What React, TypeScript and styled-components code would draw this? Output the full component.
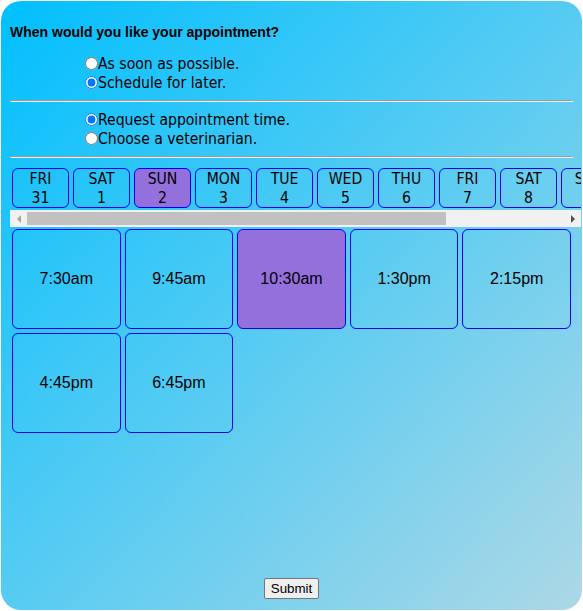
import React, { useLayoutEffect, useRef, useState } from "react";
import styled, { createGlobalStyle } from "styled-components";

const GlobalStyle = createGlobalStyle`
  html, body {
    margin: 0;
    padding: 0;
    background: #ffffff;
  }
  * { box-sizing: border-box; }
`;

const Card = styled.form`
  margin: 1px;
  height: calc(100vh - 2px);
  border-radius: 20px;
  background: linear-gradient(to bottom right, #00bfff, #add8e6);
  padding: 0 9px 11px 9px;
  display: flex;
  flex-direction: column;
  overflow: hidden;
  color: #000;
  font-family: "DejaVu Sans Condensed", "DejaVu Sans", sans-serif;
  font-stretch: condensed;
`;

const Heading = styled.div`
  font-family: "Liberation Sans", Arial, sans-serif;
  font-stretch: normal;
  font-weight: bold;
  font-size: 14px;
  line-height: 16px;
  margin: 23px 0 14px 0;
`;

const RadioGroup = styled.div`
  display: flex;
  flex-direction: column;
  padding-left: 75px;
`;

const RadioRow = styled.label`
  display: flex;
  align-items: center;
  height: 19px;
  font-size: 15.6px;
  cursor: pointer;
`;

const Radio = styled.input`
  margin: 0;
  width: 13px;
  height: 13px;
`;

const Divider = styled.hr`
  margin: 8px 0;
  border-style: inset;
  border-width: 1px;
  color: gray;
  height: 0;
  overflow: hidden;
`;

const DayArea = styled.div`
  margin-right: -8px;
  display: flex;
  flex-direction: column;
`;

const DayScroller = styled.div`
  overflow-x: auto;
  overflow-y: hidden;
  padding: 2px 2px 1px 2px;
  scrollbar-width: none;
  &::-webkit-scrollbar {
    display: none;
  }
`;

const DayRow = styled.div`
  display: flex;
  gap: 4px;
  width: max-content;
`;

const DayButton = styled.button<{ $selected?: boolean }>`
  flex: none;
  width: 57px;
  height: 40px;
  padding: 2px 0 0 0;
  border: 1px solid #0000ff;
  border-radius: 6px;
  background: ${(p) => (p.$selected ? "#9370db" : "transparent")};
  font-family: "DejaVu Sans Condensed", "DejaVu Sans", sans-serif;
  font-stretch: condensed;
  font-size: 15.6px;
  line-height: 19px;
  color: #000;
  display: flex;
  flex-direction: column;
  align-items: center;
  justify-content: center;
  cursor: pointer;
`;

const ScrollBar = styled.div`
  margin-top: 1px;
  height: 17px;
  display: flex;
  background: #f1f1f1;
`;

const ScrollArrow = styled.button`
  flex: none;
  width: 17px;
  height: 17px;
  padding: 0;
  border: none;
  background: #f1f1f1;
  display: flex;
  align-items: center;
  justify-content: center;
  cursor: default;
`;

const ScrollTrack = styled.div`
  position: relative;
  flex: 1;
`;

const ScrollThumb = styled.div`
  position: absolute;
  top: 2px;
  bottom: 2px;
  background: #c1c1c1;
`;

const SlotGrid = styled.div`
  display: grid;
  grid-template-columns: repeat(5, 1fr);
  gap: 4px;
  padding: 0 2px;
  margin-top: 2px;
`;

const Slot = styled.button<{ $selected?: boolean }>`
  height: 100px;
  padding: 0;
  border: 1px solid #0000ff;
  border-radius: 6px;
  background: ${(p) => (p.$selected ? "#9370db" : "transparent")};
  font-family: "Liberation Sans", Arial, sans-serif;
  font-size: 16px;
  color: #000;
  cursor: pointer;
`;

const Spacer = styled.div`
  flex: 1;
`;

const SubmitRow = styled.div`
  display: flex;
  justify-content: center;
`;

const SubmitButton = styled.button`
  font-family: "Liberation Sans", Arial, sans-serif;
  font-stretch: normal;
  font-size: 13.333px;
  padding: 1px 6px;
  border: 1px solid #767676;
  border-radius: 2px;
  background: #efefef;
  color: #000;
  height: 21px;
`;

const days = [
  ["FRI", "31"],
  ["SAT", "1"],
  ["SUN", "2"],
  ["MON", "3"],
  ["TUE", "4"],
  ["WED", "5"],
  ["THU", "6"],
  ["FRI", "7"],
  ["SAT", "8"],
  ["SUN", "9"],
  ["MON", "10"],
  ["TUE", "11"],
];

const slots = ["7:30am", "9:45am", "10:30am", "1:30pm", "2:15pm", "4:45pm", "6:45pm"];

export default function App() {
  const [when, setWhen] = useState("later");
  const [mode, setMode] = useState("time");
  const [day, setDay] = useState(2);
  const [slot, setSlot] = useState(2);
  const scrollerRef = useRef<HTMLDivElement>(null);
  const trackRef = useRef<HTMLDivElement>(null);
  const [thumb, setThumb] = useState({ left: 0, width: 419 });

  const measure = () => {
    const s = scrollerRef.current;
    const t = trackRef.current;
    if (!s || !t) return;
    const track = t.clientWidth;
    const ratio = s.clientWidth / s.scrollWidth;
    const width = Math.max(17, Math.round(track * ratio));
    const max = s.scrollWidth - s.clientWidth;
    const left = max > 0 ? Math.round((s.scrollLeft / max) * (track - width)) : 0;
    setThumb({ left, width });
  };

  useLayoutEffect(() => {
    measure();
    window.addEventListener("resize", measure);
    return () => window.removeEventListener("resize", measure);
  }, []);

  const scrollBy = (dx: number) => {
    scrollerRef.current?.scrollBy({ left: dx });
  };

  const atStart = thumb.left <= 0;

  return (
    <>
      <GlobalStyle />
      <Card onSubmit={(e) => e.preventDefault()}>
        <Heading>When would you like your appointment?</Heading>
        <RadioGroup>
          <RadioRow>
            <Radio type="radio" name="when" checked={when === "asap"} onChange={() => setWhen("asap")} />
            As soon as possible.
          </RadioRow>
          <RadioRow>
            <Radio type="radio" name="when" checked={when === "later"} onChange={() => setWhen("later")} />
            Schedule for later.
          </RadioRow>
        </RadioGroup>
        <Divider />
        <RadioGroup>
          <RadioRow>
            <Radio type="radio" name="mode" checked={mode === "time"} onChange={() => setMode("time")} />
            Request appointment time.
          </RadioRow>
          <RadioRow>
            <Radio type="radio" name="mode" checked={mode === "vet"} onChange={() => setMode("vet")} />
            Choose a veterinarian.
          </RadioRow>
        </RadioGroup>
        <Divider />
        <DayArea>
          <DayScroller ref={scrollerRef} onScroll={measure}>
            <DayRow>
              {days.map(([d, n], i) => (
                <DayButton type="button" key={i} $selected={i === day} onClick={() => setDay(i)}>
                  <span>{d}</span>
                  <span>{n}</span>
                </DayButton>
              ))}
            </DayRow>
          </DayScroller>
          <ScrollBar>
            <ScrollArrow type="button" aria-label="Scroll left" onClick={() => scrollBy(-40)}>
              <svg width="4" height="8" viewBox="0 0 4 8">
                <polygon points="4,0 4,8 0,4" fill={atStart ? "#a3a3a3" : "#505050"} />
              </svg>
            </ScrollArrow>
            <ScrollTrack ref={trackRef}>
              <ScrollThumb style={{ left: thumb.left, width: thumb.width }} />
            </ScrollTrack>
            <ScrollArrow type="button" aria-label="Scroll right" onClick={() => scrollBy(40)}>
              <svg width="4" height="8" viewBox="0 0 4 8">
                <polygon points="0,0 4,4 0,8" fill="#505050" />
              </svg>
            </ScrollArrow>
          </ScrollBar>
        </DayArea>
        <SlotGrid>
          {slots.map((s, i) => (
            <Slot type="button" key={s} $selected={i === slot} onClick={() => setSlot(i)}>
              {s}
            </Slot>
          ))}
        </SlotGrid>
        <Spacer />
        <SubmitRow>
          <SubmitButton type="submit">Submit</SubmitButton>
        </SubmitRow>
      </Card>
    </>
  );
}
